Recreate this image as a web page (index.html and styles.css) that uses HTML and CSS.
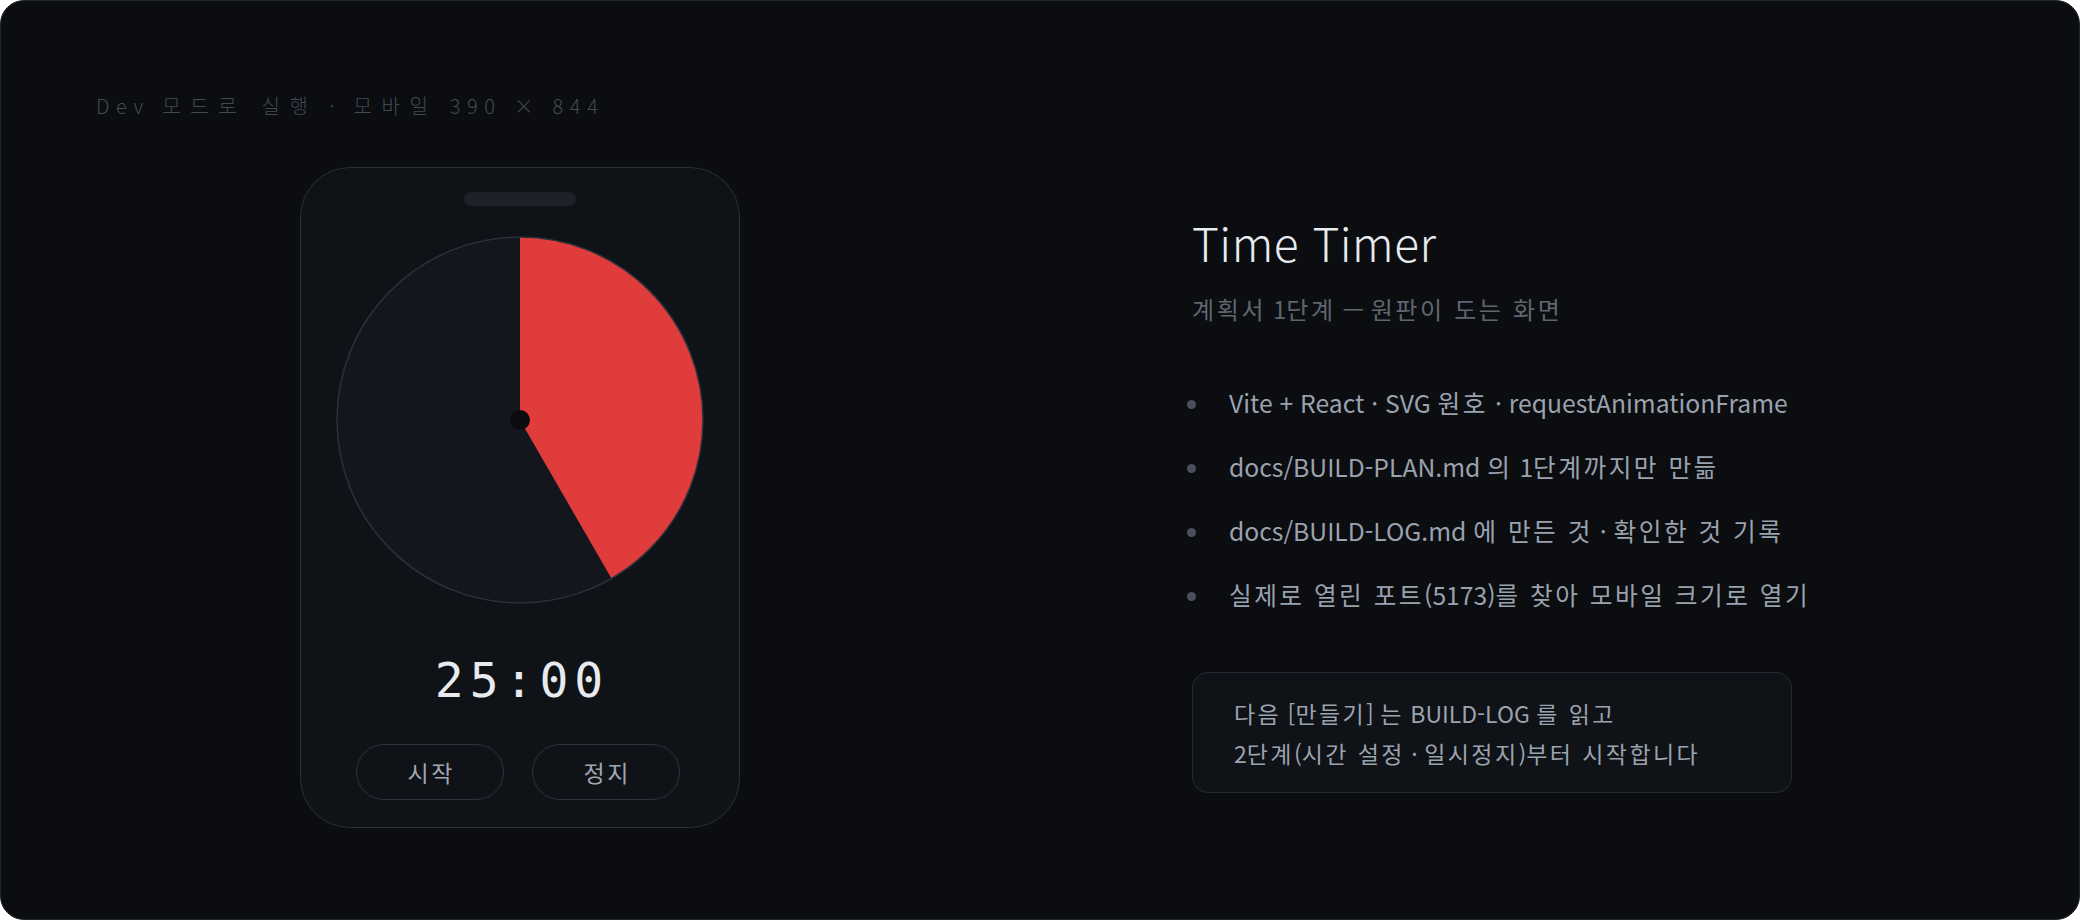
FILE: index.html
```html
<!DOCTYPE html>
<html lang="ko">
<head>
<meta charset="utf-8">
<title>Time Timer</title>
<link rel="stylesheet" href="styles.css">
</head>
<body>
<div class="frame">
  <section class="left">
    <div class="dev-label">Dev <span class="k">모드로 실행</span> · <span class="k">모바일</span> 390 × 844</div>
    <div class="phone">
      <div class="notch"></div>
      <svg class="dial" viewBox="0 0 368 368" width="368" height="368">
        <circle cx="184" cy="184" r="183" fill="#13161d"/>
        <path d="M184 184 L184 1 A183 183 0 0 1 275.5 342.5 Z" fill="#e03c3c"/>
        <circle cx="184" cy="184" r="183" fill="none" stroke="#2b313b" stroke-width="1.5"/>
        <circle cx="184" cy="184" r="10" fill="#0a0c0f"/>
      </svg>
      <div class="time">25:00</div>
      <div class="buttons">
        <button class="btn">시작</button>
        <button class="btn">정지</button>
      </div>
    </div>
  </section>
  <section class="right">
    <h1 class="title">Time Timer</h1>
    <p class="subtitle"><span class="k">계획서</span> 1<span class="k">단계</span> — <span class="k">원판이 도는 화면</span></p>
    <ul class="points">
      <li><span>Vite + React · SVG <span class="k">원호</span> · requestAnimationFrame</span></li>
      <li><span>docs/BUILD-PLAN.md <span class="k">의</span> 1<span class="k">단계까지만 만듦</span></span></li>
      <li><span>docs/BUILD-LOG.md <span class="k">에 만든 것</span> · <span class="k">확인한 것 기록</span></span></li>
      <li><span><span class="k">실제로 열린 포트</span>(5173)<span class="k">를 찾아 모바일 크기로 열기</span></span></li>
    </ul>
    <div class="note">
      <div><span class="k">다음</span> [<span class="k">만들기</span>] <span class="k">는</span> BUILD-LOG <span class="k">를 읽고</span></div>
      <div>2<span class="k">단계</span>(<span class="k">시간 설정</span> · <span class="k">일시정지</span>)<span class="k">부터 시작합니다</span></div>
    </div>
  </section>
</div>
</body>
</html>
```

FILE: styles.css
```css
html, body {
  margin: 0;
  padding: 0;
  background: #ffffff;
}

.frame {
  box-sizing: border-box;
  width: 2080px;
  height: 920px;
  border: 1px solid #1f242c;
  border-radius: 24px;
  background: #0b0d11;
  padding: 91px 0 0 95px;
  display: grid;
  grid-template-columns: 848px 1fr;
  column-gap: 248px;
  align-items: start;
  font-family: "Noto Sans CJK KR", "Noto Sans", sans-serif;
  overflow: hidden;
}

.k {
  letter-spacing: 0.11em;
}

.left {
  display: flex;
  flex-direction: column;
}

.dev-label {
  font-size: 20px;
  line-height: 28px;
  letter-spacing: 6.6px;
  font-weight: 300;
  color: #434955;
  white-space: nowrap;
}

.dev-label .k {
  letter-spacing: 9.6px;
}

.phone {
  box-sizing: border-box;
  width: 440px;
  height: 661px;
  margin: 47px 0 0 204px;
  border: 1px solid #2b3038;
  border-radius: 50px;
  background: #0f1216;
  padding: 24px 0 0;
  display: flex;
  flex-direction: column;
  align-items: center;
}

.notch {
  width: 112px;
  height: 14px;
  border-radius: 7px;
  background: #1d2229;
}

.dial {
  display: block;
  margin-top: 30px;
}

.time {
  margin-top: 48px;
  font-family: "DejaVu Sans Mono", monospace;
  font-size: 48px;
  line-height: 56px;
  letter-spacing: 6px;
  color: #e7eaee;
  padding-left: 4px;
}

.buttons {
  margin-top: 36px;
  margin-right: 4px;
  display: flex;
  gap: 28px;
}

.btn {
  box-sizing: border-box;
  width: 148px;
  height: 56px;
  border-radius: 28px;
  border: 1px solid #2d333d;
  background: transparent;
  color: #a0a7b2;
  font-family: "Noto Sans CJK KR", sans-serif;
  font-size: 23px;
  letter-spacing: 2.5px;
  padding: 0 0 0 2.5px;
}

.right {
  padding-top: 122px;
  display: flex;
  flex-direction: column;
  align-items: flex-start;
}

.title {
  margin: 0;
  font-size: 46px;
  line-height: 56px;
  font-weight: 300;
  letter-spacing: 0.5px;
  color: #e8ebef;
}

.subtitle {
  margin: 23px 0 0;
  font-size: 24px;
  line-height: 32px;
  color: #5f6670;
}

.points {
  list-style: none;
  margin: 61px 0 0;
  padding: 0;
  display: flex;
  flex-direction: column;
  gap: 32px;
}

.points li {
  display: flex;
  align-items: flex-start;
  gap: 33px;
  margin-left: -5px;
  font-size: 24.7px;
  line-height: 32px;
  color: #9aa2ae;
  white-space: nowrap;
}

.points .k {
  letter-spacing: 0.1em;
}

.points li::before {
  content: "";
  flex: none;
  width: 9px;
  height: 9px;
  margin-top: 14px;
  border-radius: 50%;
  background: #4a505b;
}

.note {
  box-sizing: border-box;
  width: 600px;
  margin-top: 62px;
  padding: 20px 0 19px 41px;
  border: 1px solid #262b33;
  border-radius: 16px;
  background: #0f1217;
  font-size: 23px;
  line-height: 40px;
  color: #9ba3ae;
}

.note .k {
  letter-spacing: 0.105em;
}
```
